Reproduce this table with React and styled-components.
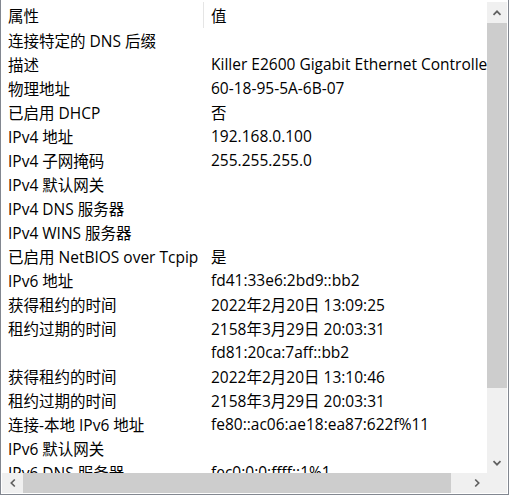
import React from "react";
import styled, { createGlobalStyle } from "styled-components";

const Global = createGlobalStyle`
  html, body { margin: 0; padding: 0; background: #fff; }
  body { font-family: "Open Sans", "Noto Sans CJK SC", sans-serif; }
`;

const Frame = styled.div`
  box-sizing: border-box;
  width: 509px;
  height: 495px;
  border: 1px solid #828790;
  border-top: none;
  padding: 2px 1px 1px 1px;
  background: #fff;
  display: grid;
  grid-template-columns: 1fr 20px;
  grid-template-rows: 1fr 20px;
`;

const Content = styled.div`
  overflow: hidden;
  white-space: nowrap;
  font-size: 15.5px;
  color: #000;
`;

const Header = styled.div`
  display: grid;
  grid-template-columns: 202px 1fr;
  height: 26px;
  align-items: center;
`;

const HeaderCell = styled.div`
  padding-left: ${(p) => (p.$first ? "6px" : "7px")};
  height: 100%;
  display: flex;
  align-items: center;
  border-right: ${(p) => (p.$first ? "1px solid #e5e5e5" : "none")};
  box-sizing: border-box;
`;

const Row = styled.div`
  display: grid;
  grid-template-columns: 209px 1fr;
  height: 24px;
  align-items: center;
`;

const Cell = styled.div`
  padding-left: ${(p) => (p.$first ? "6px" : "0")};
  overflow: ${(p) => (p.$first ? "visible" : "visible")};
`;

const VScroll = styled.div`
  background: #f0f0f0;
  display: grid;
  grid-template-rows: 21px 365px 1fr 20px;
`;

const HScroll = styled.div`
  background: #f0f0f0;
  display: grid;
  grid-template-columns: 21px 428px 1fr 20px;
`;

const Arrow = styled.div`
  display: flex;
  align-items: center;
  justify-content: center;
`;

const Thumb = styled.div`
  background: #cdcdcd;
`;

const Corner = styled.div`
  background: #f0f0f0;
`;

const Chevron = ({ dir }) => {
  const rot = { up: 0, down: 180, left: -90, right: 90 }[dir];
  return (
    <svg width="10" height="10" viewBox="0 0 10 10">
      <path
        d="M1.5 6.8 L5 3.3 L8.5 6.8"
        fill="none"
        stroke="#606060"
        strokeWidth="1.7"
        transform={`rotate(${rot} 5 5)`}
      />
    </svg>
  );
};

const rows = [
  ["连接特定的 DNS 后缀", ""],
  ["描述", "Killer E2600 Gigabit Ethernet Controller"],
  ["物理地址", "60-18-95-5A-6B-07"],
  ["已启用 DHCP", "否"],
  ["IPv4 地址", "192.168.0.100"],
  ["IPv4 子网掩码", "255.255.255.0"],
  ["IPv4 默认网关", ""],
  ["IPv4 DNS 服务器", ""],
  ["IPv4 WINS 服务器", ""],
  ["已启用 NetBIOS over Tcpip", "是"],
  ["IPv6 地址", "fd41:33e6:2bd9::bb2"],
  ["获得租约的时间", "2022年2月20日 13:09:25"],
  ["租约过期的时间", "2158年3月29日 20:03:31"],
  ["", "fd81:20ca:7aff::bb2"],
  ["获得租约的时间", "2022年2月20日 13:10:46"],
  ["租约过期的时间", "2158年3月29日 20:03:31"],
  ["连接-本地 IPv6 地址", "fe80::ac06:ae18:ea87:622f%11"],
  ["IPv6 默认网关", ""],
  ["IPv6 DNS 服务器", "fec0:0:0:ffff::1%1"],
];

export default function App() {
  return (
    <>
      <Global />
      <Frame>
        <Content>
          <Header>
            <HeaderCell $first>属性</HeaderCell>
            <HeaderCell>值</HeaderCell>
          </Header>
          {rows.map(([k, v], i) => (
            <Row key={i}>
              <Cell $first>{k}</Cell>
              <Cell>{v}</Cell>
            </Row>
          ))}
        </Content>
        <VScroll>
          <Arrow><Chevron dir="up" /></Arrow>
          <Thumb />
          <div />
          <Arrow><Chevron dir="down" /></Arrow>
        </VScroll>
        <HScroll>
          <Arrow><Chevron dir="left" /></Arrow>
          <Thumb />
          <div />
          <Arrow><Chevron dir="right" /></Arrow>
        </HScroll>
        <Corner />
      </Frame>
    </>
  );
}
